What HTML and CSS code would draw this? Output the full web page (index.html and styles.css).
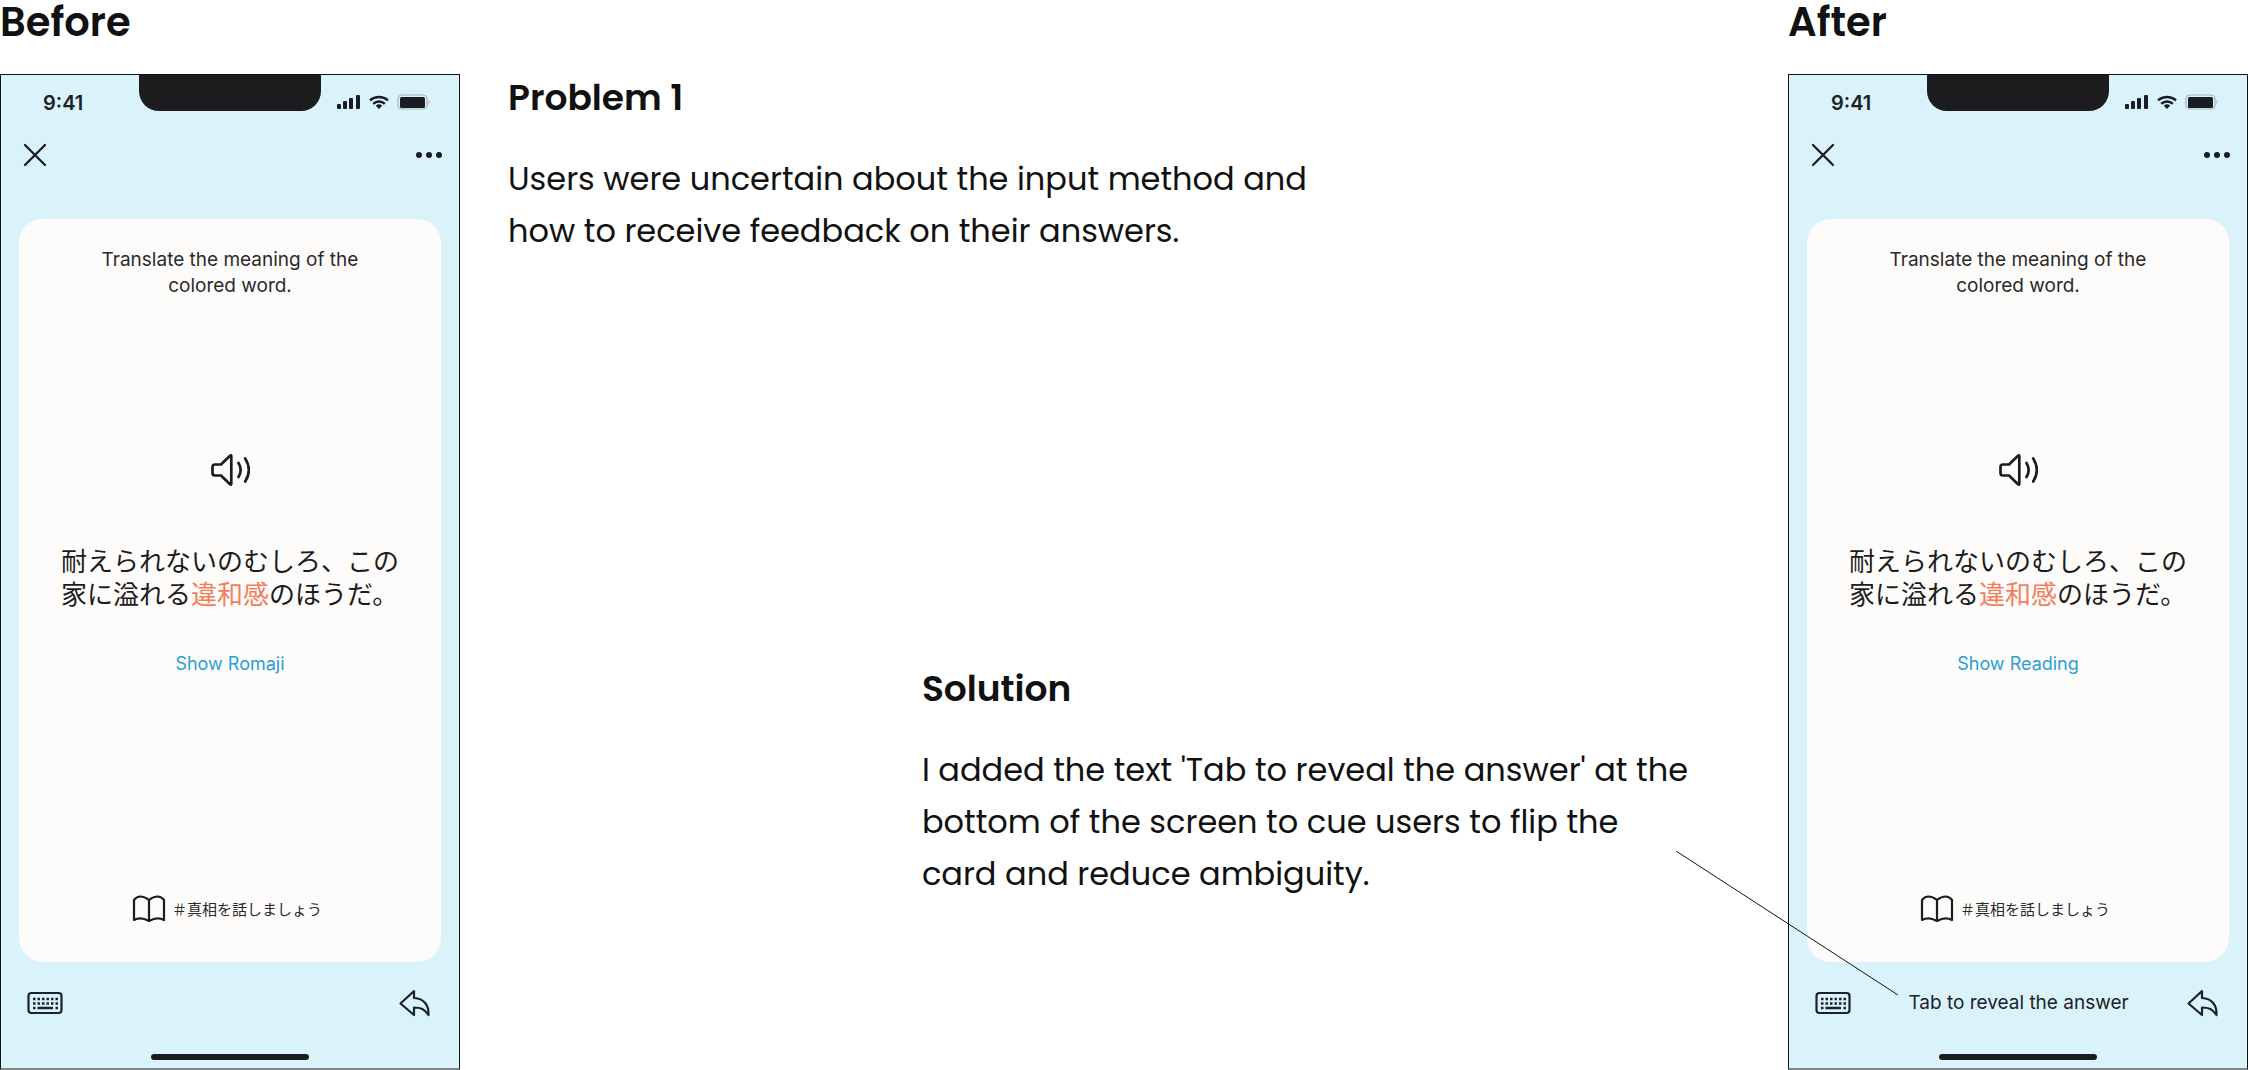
FILE: index.html
```html
<!DOCTYPE html>
<html lang="en">
<head>
<meta charset="utf-8">
<meta name="viewport" content="width=device-width, initial-scale=1">
<title>Before and after</title>
<link rel="stylesheet" href="styles.css">
</head>
<body>
<svg width="0" height="0" class="sprite" aria-hidden="true">
  <symbol id="i-status" viewBox="0 0 94 16">
    <g fill="#1a1c22">
      <rect x="1" y="10" width="4" height="5" rx="1"/><rect x="7" y="7" width="4" height="8" rx="1"/><rect x="13" y="4" width="4" height="11" rx="1"/><rect x="20" y="1" width="4" height="14" rx="1"/>
      <path d="M43 15l-3.200-3.300a4.700 4.700 0 0 1 6.400 0z"/>
      <rect x="64" y="3" width="25" height="11" rx="1.500"/>
    </g>
    <path d="M34 6.400a13.500 13.500 0 0 1 18 0M37.200 9.800a8.600 8.600 0 0 1 11.600 0" fill="none" stroke="#1a1c22" stroke-width="2.500"/>
    <rect x="62" y="1" width="29" height="14" rx="4" fill="none" stroke="#a3b3b9" stroke-width="1.200"/>
    <path d="M92.500 6v4a2.400 2.400 0 0 0 0-4z" fill="#a3b3b9"/>
  </symbol>
  <symbol id="i-close" viewBox="0 0 24 24"><path d="M2 2l20 20M22 2L2 22" fill="none" stroke="#1a1c22" stroke-width="2.300" stroke-linecap="round"/></symbol>
  <symbol id="i-more" viewBox="0 0 28 8"><g fill="#1a1c22"><circle cx="4" cy="4" r="3"/><circle cx="14" cy="4" r="3"/><circle cx="24" cy="4" r="3"/></g></symbol>
  <symbol id="i-sound" viewBox="0 0 40 34"><g fill="none" stroke="#1c1c1c" stroke-width="2.700" stroke-linecap="round" stroke-linejoin="round"><path d="M11 11.500L20 2.700q1.300-1 1.300.5v27.600q0 1.500-1.300.5L11 22.500H5q-2.500 0-2.500-2.500v-6q0-2.500 2.500-2.500z"/><path d="M28.500 10q4.300 7 0 14M35.200 5.500q7.300 11.500 0 23"/></g></symbol>
  <symbol id="i-book" viewBox="0 0 34 28"><path d="M17 5q-4.500-3.500-8.500-3.500T2 5v20q3-1.600 6.500-1.600T17 26q5-2.600 8.500-2.600T32 25V5q-2.500-3.500-6.500-3.500T17 5zv21" fill="none" stroke="#1c1c1c" stroke-width="2.200" stroke-linejoin="round"/></symbol>
  <symbol id="i-keyboard" viewBox="0 0 36 24"><rect x="1.500" y="2" width="33" height="20" rx="3" fill="none" stroke="#1c2229" stroke-width="2.200"/><path d="M6 8h25M6 12.500h25" stroke="#1c2229" stroke-width="2.500" stroke-dasharray="2.500 2"/><path d="M6 17h2.500M10.500 17h15.500M28.500 17h2.500" stroke="#1c2229" stroke-width="2.500"/></symbol>
  <symbol id="i-reply" viewBox="0 0 34 28"><path d="M16 2L2.500 14.500 16 26v-7.500c7 0 10.500 1.500 14.500 7.500C31 16 26 9.500 16 9z" fill="none" stroke="#1c2229" stroke-width="2.200" stroke-linejoin="round"/></symbol>
</svg>
<main class="board">
  <section class="column">
    <h2 class="title">Before</h2>
    <article class="phone">
      <div class="status"><span class="time">9:41</span><span class="notch"></span><svg class="status-icons"><use href="#i-status"/></svg></div>
      <div class="bar top">
        <button class="icon" aria-label="Close"><svg width="24" height="24"><use href="#i-close"/></svg></button>
        <button class="icon" aria-label="More"><svg width="28" height="8"><use href="#i-more"/></svg></button>
      </div>
      <div class="card">
        <p class="prompt">Translate the meaning of the<br>colored word.</p>
        <div class="question">
          <button class="icon" aria-label="Play"><svg width="40" height="34"><use href="#i-sound"/></svg></button>
          <p class="sentence" lang="ja">耐えられないのむしろ、この<br>家に溢れる<em>違和感</em>のほうだ。</p>
          <button class="reading">Show Romaji</button>
        </div>
        <p class="source" lang="ja"><svg width="34" height="28"><use href="#i-book"/></svg>＃真相を話しましょう</p>
      </div>
      <div class="bar bottom">
        <button class="icon" aria-label="Keyboard"><svg width="36" height="24"><use href="#i-keyboard"/></svg></button>
        <button class="icon" aria-label="Back"><svg width="34" height="28"><use href="#i-reply"/></svg></button>
      </div>
      <div class="home"></div>
    </article>
  </section>

  <div class="notes">
    <section class="note">
      <h3>Problem 1</h3>
      <p>Users were uncertain about the input method and<br>how to receive feedback on their answers.</p>
    </section>
    <section class="note solution">
      <h3>Solution</h3>
      <p>I added the text 'Tab to reveal the answer' at the<br>bottom of the screen to cue users to flip the<br>card and reduce ambiguity.</p>
    </section>
  </div>

  <section class="column">
    <h2 class="title">After</h2>
    <article class="phone">
      <div class="status"><span class="time">9:41</span><span class="notch"></span><svg class="status-icons"><use href="#i-status"/></svg></div>
      <div class="bar top">
        <button class="icon" aria-label="Close"><svg width="24" height="24"><use href="#i-close"/></svg></button>
        <button class="icon" aria-label="More"><svg width="28" height="8"><use href="#i-more"/></svg></button>
      </div>
      <div class="card">
        <p class="prompt">Translate the meaning of the<br>colored word.</p>
        <div class="question">
          <button class="icon" aria-label="Play"><svg width="40" height="34"><use href="#i-sound"/></svg></button>
          <p class="sentence" lang="ja">耐えられないのむしろ、この<br>家に溢れる<em>違和感</em>のほうだ。</p>
          <button class="reading">Show Reading</button>
        </div>
        <p class="source" lang="ja"><svg width="34" height="28"><use href="#i-book"/></svg>＃真相を話しましょう</p>
      </div>
      <div class="bar bottom">
        <button class="icon" aria-label="Keyboard"><svg width="36" height="24"><use href="#i-keyboard"/></svg></button>
        <span class="hint">Tab to reveal the answer</span>
        <button class="icon" aria-label="Back"><svg width="34" height="28"><use href="#i-reply"/></svg></button>
      </div>
      <div class="home"></div>
      <svg class="connector" width="222" height="144" viewBox="0 0 222 144" aria-hidden="true"><path d="M0 0L222 144" stroke="#111" fill="none"/></svg>
    </article>
  </section>
</main>
</body>
</html>
```
FILE: styles.css
```css
* { box-sizing: border-box; }

body {
  margin: 0;
  background: #fff;
  color: #111;
  font-family: Inter, "Noto Sans CJK JP", sans-serif;
}

h2, h3, p { margin: 0; }

.sprite { position: absolute; }

.board {
  display: flex;
  min-height: 100vh;
}

.column {
  flex: 0 0 460px;
  display: flex;
  flex-direction: column;
}

.title {
  height: 74px;
  font: 600 40px/44px Poppins, Inter, sans-serif;
}

.phone {
  position: relative;
  flex: 1;
  display: flex;
  flex-direction: column;
  border: 1px solid #111;
  border-bottom: 2px solid #808588;
  background: #daf3fb;
}

.status {
  display: grid;
  grid-template-columns: 1fr 182px 1fr;
  height: 56px;
}

.time {
  padding-left: 42px;
  font-size: 20px;
  line-height: 56px;
  font-weight: 600;
  color: #1c2229;
}

.notch {
  height: 36px;
  border-radius: 0 0 20px 20px;
  background: #1c1c1e;
}

.status-icons {
  width: 94px;
  height: 16px;
  margin: 19px 0 0 15px;
}

.bar {
  display: flex;
  align-items: center;
  justify-content: space-between;
}

.top {
  height: 48px;
  padding: 0 16px 0 22px;
}

.bottom {
  height: 82px;
  padding: 0 27px 0 26px;
}

button {
  border: 0;
  padding: 0;
  background: none;
  font: inherit;
  cursor: pointer;
}

.icon { display: flex; }

.card {
  flex: 1;
  display: flex;
  flex-direction: column;
  align-items: center;
  justify-content: space-between;
  margin: 40px 18px 0;
  padding: 28px 0 38px;
  border-radius: 24px;
  background: #fefcfb;
}

.prompt {
  font-size: 19px;
  line-height: 26px;
  text-align: center;
  color: #2a2a2a;
}

.question {
  display: flex;
  flex-direction: column;
  align-items: center;
  margin-bottom: 64px;
  color: #1c1c1c;
}

.sentence {
  margin: 56px 0 42px;
  font: 400 26px/33px "Noto Sans CJK JP", sans-serif;
}

.sentence em {
  font-style: normal;
  color: #f27f5c;
}

.reading {
  font-size: 18px;
  line-height: 26px;
  color: #2a9fd4;
}

.source {
  display: flex;
  align-items: center;
  gap: 6px;
  margin-right: 6px;
  font: 400 15px/30px "Noto Sans CJK JP", sans-serif;
  color: #2a2a2a;
}

.hint {
  font-size: 19px;
  line-height: 26px;
  color: #1c2229;
}

.home {
  align-self: center;
  width: 158px;
  height: 6px;
  margin: 10px 0 8px;
  border-radius: 3px;
  background: #1c1c1e;
}

.connector {
  position: absolute;
  left: -113px;
  bottom: 73px;
}

.notes {
  flex: 1;
  display: flex;
  flex-direction: column;
  justify-content: space-between;
  padding: 74px 100px 170px 48px;
}

.note h3 {
  margin-bottom: 31px;
  font: 600 36px/48px Poppins, Inter, sans-serif;
}

.note p {
  font: 400 32px/52px Poppins, Inter, sans-serif;
}

.solution { align-self: flex-end; }
```
